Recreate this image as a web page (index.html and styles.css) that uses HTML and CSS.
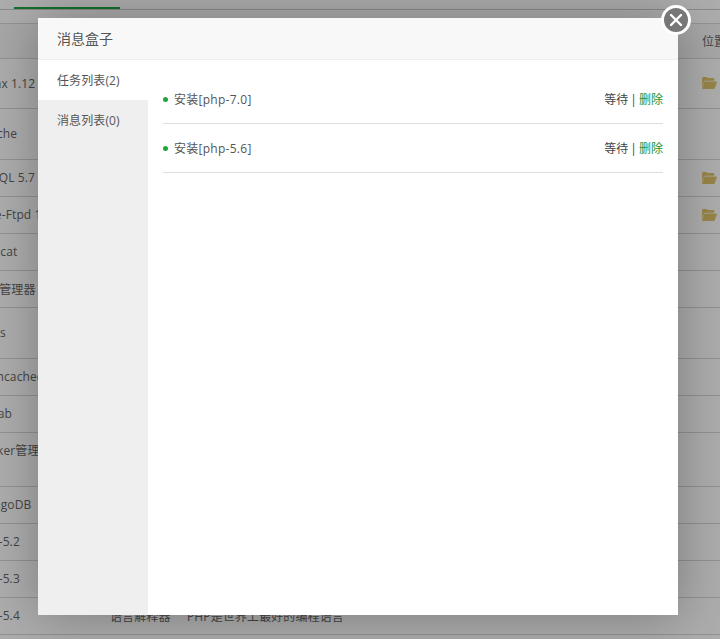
FILE: index.html
```html
<!DOCTYPE html>
<html lang="zh-CN">
<head>
<meta charset="utf-8">
<title>消息盒子</title>
<link rel="stylesheet" href="styles.css">
</head>
<body>
<div class="page">
  <div class="tabs"><span class="tab-active"></span></div>
  <div class="table">
    <div class="row head"><span class="name"></span><span class="type"></span><span class="desc"></span><span class="loc">位置</span></div>
    <div class="row h50"><span class="name">Nginx 1.12</span><span class="loc"><svg class="folder" viewBox="0 0 16 13"><path d="M0 11.5V1.6C0 .7.6 0 1.4 0h3.2c.7 0 1.1.4 1.3 1h6c.8 0 1.3.5 1.3 1.3V4H3.6c-.6 0-1.1.3-1.3.9z"/><path d="M3.4 5H15.3c.5 0 .8.4.6.9l-2.1 6.3c-.2.5-.6.8-1.1.8H.6c-.4 0-.7-.4-.5-.8L2.300 5.800C2.500 5.300 2.900 5 3.400 5z"/></svg></span></div>
    <div class="row h51"><span class="name">Apache</span></div>
    <div class="row"><span class="name">MySQL 5.7</span><span class="loc"><svg class="folder" viewBox="0 0 16 13"><path d="M0 11.5V1.6C0 .7.6 0 1.4 0h3.2c.7 0 1.1.4 1.3 1h6c.8 0 1.3.5 1.3 1.3V4H3.6c-.6 0-1.1.3-1.3.9z"/><path d="M3.4 5H15.3c.5 0 .8.4.6.9l-2.1 6.3c-.2.5-.6.8-1.1.8H.6c-.4 0-.7-.4-.5-.8L2.300 5.800C2.500 5.300 2.900 5 3.400 5z"/></svg></span></div>
    <div class="row"><span class="name">Pure-Ftpd 1.0.47</span><span class="loc"><svg class="folder" viewBox="0 0 16 13"><path d="M0 11.5V1.6C0 .7.6 0 1.4 0h3.2c.7 0 1.1.4 1.3 1h6c.8 0 1.3.5 1.3 1.3V4H3.6c-.6 0-1.1.3-1.3.9z"/><path d="M3.4 5H15.3c.5 0 .8.4.6.9l-2.1 6.3c-.2.5-.6.8-1.1.8H.6c-.4 0-.7-.4-.5-.8L2.300 5.800C2.500 5.300 2.900 5 3.400 5z"/></svg></span></div>
    <div class="row"><span class="name">Tomcat</span></div>
    <div class="row"><span class="name">宝塔管理器</span></div>
    <div class="row h51"><span class="name">Redis</span></div>
    <div class="row"><span class="name">Memcached</span></div>
    <div class="row"><span class="name">GitLab</span></div>
    <div class="row h54"><span class="name">Docker管理器</span></div>
    <div class="row"><span class="name">MongoDB</span></div>
    <div class="row"><span class="name">PHP-5.2</span></div>
    <div class="row"><span class="name">PHP-5.3</span></div>
    <div class="row"><span class="name">PHP-5.4</span><span class="type">语言解释器</span><span class="desc">PHP是世界上最好的编程语言</span></div>
  </div>

  <div class="shade"></div>

  <div class="modal">
    <div class="modal-title">消息盒子</div>
    <div class="modal-body">
      <ul class="side">
        <li class="side-item active">任务列表(2)</li>
        <li class="side-item">消息列表(0)</li>
      </ul>
      <div class="tasks">
        <div class="task">
          <span class="dot"></span><span class="task-name">安装[php-7.0]</span>
          <span class="task-state">等待 | <a class="del">删除</a></span>
        </div>
        <div class="task">
          <span class="dot"></span><span class="task-name">安装[php-5.6]</span>
          <span class="task-state">等待 | <a class="del">删除</a></span>
        </div>
      </div>
    </div>
    <button class="close" aria-label="关闭">
      <svg viewBox="0 0 14 14"><path d="M2 2l10 10M12 2L2 12"/></svg>
    </button>
  </div>
</div>
</body>
</html>
```
FILE: styles.css
```css
* { box-sizing: border-box; }
html, body { margin: 0; padding: 0; }
body {
  font-family: "Open Sans", "Noto Sans CJK SC", sans-serif;
  font-size: 12px;
  color: #666;
  background: #fff;
}
.page {
  position: relative;
  width: 720px;
  height: 639px;
  overflow: hidden;
}
.tabs {
  height: 24px;
  border-bottom: 1px solid #d8d8d8;
  position: relative;
  background: #fff;
}
.tabs::before {
  content: "";
  display: block;
  height: 9px;
  border-bottom: 1px solid #ccc;
}
.tab-active {
  position: absolute;
  top: 7px;
  left: 14px;
  width: 106px;
  height: 2px;
  background: #20a53a;
}
.table { margin-left: -25px; }
.row {
  display: flex;
  align-items: center;
  height: 37px;
  padding-bottom: 1px;
  border-bottom: 1px solid #d8d8d8;
  font-size: 12px;
  letter-spacing: .12px;
  white-space: nowrap;
}
.row.head { height: 35px; background: #f6f6f8; }
.row.h50 { height: 50px; }
.row.h51 { height: 51px; }
.row.h54 { height: 54px; padding-bottom: 20px; }
.name { width: 135px; flex: none; }
.type { width: 77px; flex: none; }
.desc { width: 515px; flex: none; }
.loc { margin-left: auto; width: 18px; flex: none; }
.row > .name + .loc { margin-left: 592px; }
.row.head .loc { margin-left: 0; }
.folder { display: block; width: 15px; height: 12px; fill: #dfc56b; }

.shade {
  position: absolute;
  inset: 0;
  background: rgba(0, 0, 0, .32);
}
.modal {
  position: absolute;
  left: 38px;
  top: 18px;
  width: 640px;
  height: 597px;
  background: #fff;
  box-shadow: 1px 1px 50px rgba(0, 0, 0, .3);
  display: flex;
  flex-direction: column;
}
.modal-title {
  height: 42px;
  flex: none;
  padding-left: 19px;
  line-height: 41px;
  font-size: 14px;
  color: #555;
  background: #f8f8f8;
  border-bottom: 1px solid #eee;
}
.modal-body { flex: 1; display: flex; min-height: 0; }
.side {
  list-style: none;
  margin: 0;
  padding: 0;
  width: 110px;
  flex: none;
  background: #efefef;
}
.side-item {
  height: 40px;
  padding: 1px 0 0 19px;
  line-height: 40px;
  font-size: 12px;
  letter-spacing: .1px;
  color: #555;
}
.side-item.active { background: #fff; }
.tasks { flex: 1; padding: 15px 15px 0; }
.task {
  display: flex;
  align-items: center;
  height: 49px;
  border-bottom: 1px solid #ddd;
  color: #555;
}
.dot {
  width: 5px;
  height: 5px;
  border-radius: 50%;
  background: #20a53a;
  flex: none;
  margin-right: 6px;
}
.task-name { flex: 1; letter-spacing: .27px; }
.task-state { color: #444; word-spacing: -1px; }
.del { color: #1f8f2f; }
.close {
  position: absolute;
  right: -13px;
  top: -13px;
  width: 30px;
  height: 30px;
  padding: 0;
  border: 3px solid #fff;
  border-radius: 50%;
  background: #777;
  display: flex;
  align-items: center;
  justify-content: center;
}
.close svg {
  width: 14px;
  height: 14px;
  fill: none;
  stroke: #fff;
  stroke-width: 2.400;
  stroke-linecap: round;
}
```
